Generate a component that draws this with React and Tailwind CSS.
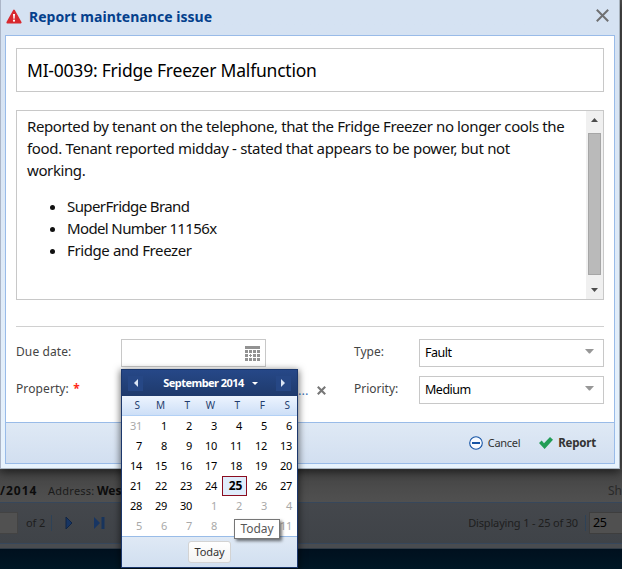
import React from "react";

const WEEKDAYS = ["S", "M", "T", "W", "T", "F", "S"];
const WEEKS = [
  [31, 1, 2, 3, 4, 5, 6],
  [7, 8, 9, 10, 11, 12, 13],
  [14, 15, 16, 17, 18, 19, 20],
  [21, 22, 23, 24, 25, 26, 27],
  [28, 29, 30, 1, 2, 3, 4],
  [5, 6, 7, 8, 9, 10, 11],
];

function Combo({ value }) {
  return (
    <div className="flex h-7 w-[185px] items-center justify-between border border-[#c8c8c8] bg-white pl-[5px] pr-[9px] text-[12.5px] tracking-[-0.5px] text-black">
      <span className="pt-px">{value}</span>
      <svg width="9" height="5" viewBox="0 0 9 5" className="mb-1"><path d="M0 0h9L5 4.5H4z" fill="#979797" /></svg>
    </div>
  );
}

function Calendar() {
  return (
    <div className="absolute left-[121px] top-[369px] flex h-[199px] w-[177px] flex-col border border-[#1b376c] bg-white shadow-[0_2px_7px_1px_rgba(0,0,0,0.55)]">
      <div className="flex h-[26px] shrink-0 items-center justify-between bg-linear-to-b from-[#264888] to-[#1f3a6c] px-[6px] text-[11px] font-bold text-white">
        <span className="flex size-[15px] items-center justify-center bg-[#264785]">
          <svg width="4" height="8" viewBox="0 0 4 8"><path d="M4 0v8L0 4z" fill="#dbe5f5" /></svg>
        </span>
        <span className="ml-[2px] flex items-center gap-2">
          <span className="tracking-[-0.55px]">September 2014</span>
          <svg width="6" height="3" viewBox="0 0 6 3"><path d="M0 0h6L3 3z" fill="#fff" /></svg>
        </span>
        <span className="flex size-[15px] items-center justify-center bg-[#264785]">
          <svg width="4" height="8" viewBox="0 0 4 8"><path d="M0 0v8L4 4z" fill="#dbe5f5" /></svg>
        </span>
      </div>
      <div className="grid h-5 shrink-0 grid-cols-[repeat(7,25px)] border-b border-[#b2d0f5] bg-linear-to-b from-[#edf4fe] to-[#cddff7] text-[10px] leading-[19px] text-[#233d6d]">
        {WEEKDAYS.map((d, i) => <span key={i} className="pr-[7px] text-right">{d}</span>)}
      </div>
      <div className="grid h-[120px] shrink-0 grid-cols-[repeat(7,25px)] grid-rows-[repeat(6,20px)] text-[11px] leading-5 tracking-[-0.3px] text-black">
        {WEEKS.map((week, w) => week.map((d, i) => {
          const outside = (w === 0 && d > 7) || (w > 3 && d < 15);
          const today = w === 3 && d === 25;
          return (
            <span
              key={w + "-" + i}
              className={
                today
                  ? "border border-[#8b0d20] bg-[#dfecfb] pr-1 text-right text-[12px] font-bold leading-[18px]"
                  : outside ? "pr-[5px] text-right text-[#a9a9a9]" : "pr-[5px] text-right"
              }
            >{d}</span>
          );
        }))}
      </div>
      <div className="flex flex-1 items-center justify-center border-t border-[#99bce8] bg-linear-to-b from-[#dfe9f5] to-[#d1dff0]">
        <span className="flex h-[22px] w-[43px] items-center justify-center rounded-[3px] border border-[#d3d3d3] bg-linear-to-b from-white to-[#f3f3f3] text-[11px] tracking-[-0.1px] text-[#333]">Today</span>
      </div>
      <div className="absolute left-[112px] top-[149px] flex h-5 w-[46px] items-center justify-center border border-[#767676] bg-white text-[12px] tracking-[-0.1px] text-[#575757] shadow-[2px_2px_3px_rgba(0,0,0,0.55)]">Today</div>
    </div>
  );
}

function Backdrop() {
  return (
    <div className="flex h-full flex-col bg-[#4f4f4f] pt-[470px]">
      <div className="flex h-[33px] shrink-0 items-center justify-between border-b border-[#37475b] bg-linear-to-b from-[#454545] to-[#505050] pt-[10px] text-[11px] text-[#1b1b1b]">
        <span className="flex items-center whitespace-pre"><b className="w-[38px] text-[12px] tracking-[1px] text-[#0c0c0c]">/2014</b><span className="ml-[10px] w-[49px] tracking-[0.25px]">Address: </span><b className="text-[12px] text-[#0c0c0c]">Wes</b></span>
        <span className="text-[12px] text-[#292929]">Sh</span>
      </div>
      <div className="flex h-[41px] shrink-0 items-center border-b border-[#37475b] bg-linear-to-b from-[#44474c] to-[#3f4348] text-[11px] text-[#1e1e1e]">
        <span className="h-[22px] w-[18px] border border-l-0 border-[#434343] bg-[#515151]" />
        <span className="ml-[8px] w-[19px] whitespace-nowrap tracking-[-0.1px]">of 2</span>
        <span className="ml-[6px] h-4 w-px bg-[#2e4257]" />
        <svg className="ml-[13px]" width="8" height="12" viewBox="0 0 8 12"><path d="M1 0l6 6-6 6z" fill="#173563" stroke="#102444" strokeWidth="1" /></svg>
        <svg className="ml-[21px]" width="11" height="12" viewBox="0 0 11 12"><path d="M0 0l6 6-6 6z" fill="#173563" /><path d="M7.5 0h3v12h-3z" fill="#18345c" /></svg>
        <span className="ml-auto text-[11px] tracking-[-0.17px]">Displaying 1 - 25 of 30</span>
        <span className="ml-[7px] h-4 w-px bg-[#2e4257]" />
        <span className="ml-[3px] flex h-[22px] w-[33px] items-center border border-r-0 border-[#3e3e3e] bg-[#505050] pl-[3px] text-[12.5px] tracking-[-0.3px] text-black">25</span>
      </div>
      <div className="h-[5px] shrink-0 border-b border-[#303b46] bg-[#494c50]" />
      <div className="flex-1 bg-linear-to-b from-[#00101e] to-[#001725]" />
    </div>
  );
}

function IssueDialog() {
  return (
    <div className="absolute left-0 top-0 flex h-[469px] w-[620px] flex-col border-b border-l border-r border-b-[#acb7c2] border-l-[#acb6c8] border-r-[#a5b0bb] bg-linear-to-b from-[#d5e2f2] from-10% to-[#e8f3fd] pb-[4px] pl-[4px] pr-[4px] shadow-[0_3px_9px_rgba(0,0,0,0.6)]">
      <div className="flex h-[35px] shrink-0 items-center pl-px pr-[6px] pb-[3px]">
        <svg width="16" height="15" viewBox="0 0 16 15">
          <path d="M8 1.5L14.7 13.5H1.3z" fill="#d8292f" stroke="#d8292f" strokeWidth="1.8" strokeLinejoin="round" />
          <path d="M7 5h2l-.4 4.7H7.4z" fill="#fff" /><circle cx="8" cy="11.7" r="1.1" fill="#fff" />
        </svg>
        <h1 className="ml-[7px] text-[14px] font-bold tracking-[0.03px] text-[#04408c]">Report maintenance issue</h1>
        <svg className="mb-px ml-auto" width="13" height="13" viewBox="0 0 13 13"><path d="M.8.8l11.4 11.4M12.2.8L.8 12.2" stroke="#6f7072" strokeWidth="2" /></svg>
      </div>
      <div className="flex flex-1 flex-col border border-[#99bbe8] bg-white">
        <div className="flex flex-1 flex-col px-[10px] pt-3">
          <div className="flex h-11 w-[588px] items-center border border-[#c8c8c8] pl-[10px] pt-px text-[17.5px] tracking-[-0.22px] text-black">MI-0039: Fridge Freezer Malfunction</div>
          <div className="mt-[18px] flex h-[190px] w-[588px] border border-[#c8c8c8]">
            <div className="min-w-0 flex-1 whitespace-nowrap pl-[10px] pt-1 text-[15px] leading-[22px] tracking-[-0.39px] text-[#111]">
              <p>Reported by tenant on the telephone, that the Fridge Freezer no longer cools the<br /><span className="tracking-[-0.33px]">food. Tenant reported midday - stated that appears to be power, but not</span><br />working.</p>
              <ul className="mt-[14px] list-disc pl-10">
                <li className="tracking-[-0.6px]">SuperFridge Brand</li>
                <li className="tracking-[-0.63px]">Model Number 11156x</li>
                <li>Fridge and Freezer</li>
              </ul>
            </div>
            <div className="flex w-[17px] shrink-0 flex-col items-center bg-[#f0f0f0]">
              <span className="flex h-[22px] items-center pb-1"><svg width="7" height="4" viewBox="0 0 7 4"><path d="M0 4h7L3.5 0z" fill="#4d4d4d" /></svg></span>
              <span className="h-[142px] w-[13px] border border-[#a6a6a6] bg-[#bababa]" />
              <span className="mt-[13px]"><svg className="block" width="7" height="4" viewBox="0 0 7 4"><path d="M0 0h7L3.5 4z" fill="#4d4d4d" /></svg></span>
            </div>
          </div>
          <div className="mt-[26px] h-px w-[588px] bg-[#d0d0d0]" />
          <div className="mt-3 grid grid-cols-[105px_233px_65px_185px] gap-y-[9px] text-[12px] text-[#444]">
            <span className="pt-1 tracking-[0.1px]">Due date:</span>
            <div className="flex h-7 w-[145px] items-center justify-end border border-[#c8c8c8] pr-[5px]">
              <svg width="15" height="15" viewBox="0 0 15 15" fill="#929292">
                <path d="M0 0h15v3H0z" />
                <path d="M0 4h3v3H0zM4 4h3v3H4zM8 4h3v3H8zM12 4h3v3h-3zM0 8h3v3H0zM12 8h3v3h-3zM0 12h3v3H0zM4 12h3v3H4zM8 12h3v3H8zM12 12h3v3h-3zM5 8h1v1h1v1H6v1H5v-1H4V9h1zM8 8h3v3H8z" />
              </svg>
            </div>
            <span className="pt-1">Type:</span>
            <Combo value="Fault" />
            <span className="pt-1 tracking-[0.1px]">Property: <b className="ml-px text-[12px] leading-none text-[#ff2a1a]">*</b></span>
            <div className="flex items-center pl-[177px]">
              <span className="w-[13px] text-[13px] leading-none text-[#4378b9]">...</span>
              <svg className="ml-[6px]" width="9" height="9" viewBox="0 0 9 9"><path d="M.8.8l7.4 7.4M8.2.8L.8 8.2" stroke="#777" strokeWidth="2.1" /></svg>
            </div>
            <span className="pt-1">Priority:</span>
            <Combo value="Medium" />
          </div>
        </div>
        <div className="flex h-[41px] shrink-0 items-center justify-end border-t border-[#99bbe8] bg-linear-to-b from-[#dfe9f5] to-[#d2dff0] pr-[18px] text-[11px] text-[#333]">
          <svg width="14" height="14" viewBox="0 0 14 14"><circle cx="7" cy="7" r="6.3" fill="#f7faff" stroke="#1553a5" strokeWidth="1.1" /><path d="M3 6h8v2H3z" fill="#1553a5" /></svg>
          <span className="ml-[5px] tracking-[-0.3px]">Cancel</span>
          <svg className="ml-[19px]" width="14" height="12" viewBox="0 0 14 12"><path d="M0 6l2.7-2.5L5 6.3 11 0l3 2.7L5.6 12z" fill="#219d56" /></svg>
          <span className="ml-[5px] text-[11.5px] font-bold tracking-[-0.2px]">Report</span>
        </div>
      </div>
    </div>
  );
}

export default function App() {
  return (
    <main className="relative h-[569px] w-[622px] overflow-hidden font-['Noto_Sans','Open_Sans',sans-serif]">
      <Backdrop />
      <IssueDialog />
      <Calendar />
    </main>
  );
}
